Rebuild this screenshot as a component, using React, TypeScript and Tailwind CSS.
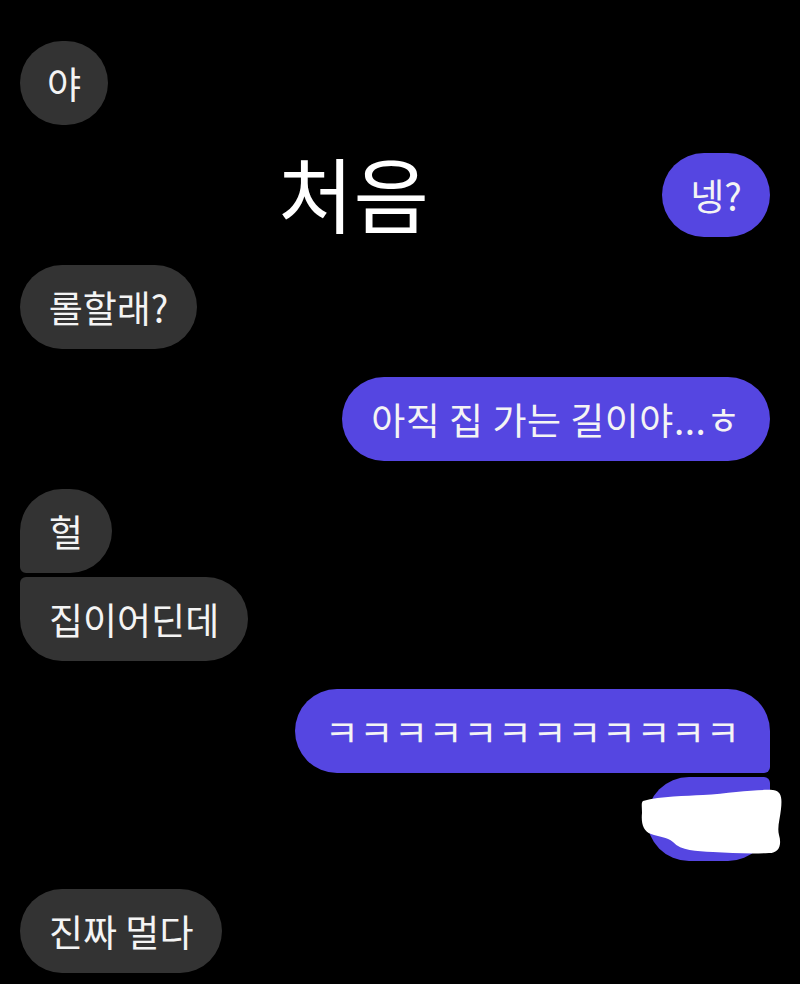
const font = { fontFamily: '"Noto Sans CJK KR", "Noto Sans", sans-serif' };

type Side = 'in' | 'out';

function Bubble({ side, text, corner = '' }: { side: Side; text?: string; corner?: string }) {
  const color = side === 'in' ? 'bg-[#333333]' : 'bg-[#5546e1]';
  return (
    <div
      className={`h-[84px] min-w-[88px] px-[29px] rounded-[42px] flex items-center justify-center ${color} ${corner}`}
    >
      <span className="text-[37px] leading-none text-[#f4f4f4] whitespace-pre">{text}</span>
    </div>
  );
}

function Row({ side, children }: { side: Side; children: React.ReactNode }) {
  return <div className={`flex ${side === 'in' ? 'justify-start' : 'justify-end'}`}>{children}</div>;
}

function Scribble() {
  return (
    <svg
      className="absolute left-[-6px] top-[10px]"
      width="142"
      height="70"
      viewBox="0 0 142 70"
    >
      <path
        d="M2 14 C 20 9, 45 9, 62 8 C 90 6, 115 2, 132 3 C 141 4, 141 12, 140 22 C 139 32, 136 40, 138 48 C 141 58, 138 66, 128 66 C 110 67, 90 66, 72 65 C 55 64, 40 64, 32 55 C 26 50, 18 50, 10 47 C 2 44, 0 36, 1 26 C 1 19, 0 16, 2 14 Z"
        fill="#ffffff"
      />
    </svg>
  );
}

export default function App() {
  return (
    <div className="w-[800px] h-[984px] bg-black overflow-hidden" style={font}>
      <div className="flex flex-col pt-[41px] pl-[20px] pr-[30px]">
        <Row side="in">
          <div className="h-[84px] w-[88px] rounded-[42px] bg-[#333333] flex items-center justify-center">
            <span className="text-[37px] leading-none text-[#f4f4f4]">야</span>
          </div>
        </Row>

        <div className="mt-[28px] flex items-center justify-between">
          <span className="ml-[258px] text-[82px] leading-none text-white mt-[-6px]">처음</span>
          <div className="h-[84px] w-[108px] rounded-[42px] bg-[#5546e1] flex items-center justify-center">
            <span className="text-[37px] leading-none text-[#f4f4f4]">넹?</span>
          </div>
        </div>

        <div className="mt-[28px]">
          <Row side="in">
            <div className="h-[84px] w-[177px] rounded-[42px] bg-[#333333] flex items-center justify-center">
              <span className="text-[37px] leading-none text-[#f4f4f4]">롤할래?</span>
            </div>
          </Row>
        </div>

        <div className="mt-[28px]">
          <Row side="out">
            <div className="h-[84px] w-[428px] rounded-[42px] bg-[#5546e1] flex items-center justify-center">
              <span className="text-[37px] leading-none text-[#f4f4f4] tracking-[0.5px]">아직 집 가는 길이야...ㅎ</span>
            </div>
          </Row>
        </div>

        <div className="mt-[28px] flex flex-col gap-[4px]">
          <Row side="in">
            <Bubble side="in" text="헐" corner="rounded-bl-[6px]" />
          </Row>
          <Row side="in">
            <Bubble side="in" text="집이어딘데" corner="rounded-tl-[6px]" />
          </Row>
        </div>

        <div className="mt-[28px] flex flex-col gap-[4px]">
          <Row side="out">
            <div className="h-[84px] w-[475px] rounded-[42px] rounded-br-[6px] bg-[#5546e1] flex items-center justify-center">
              <span className="text-[37px] leading-none text-[#f4f4f4] tracking-[0.6px]">ㅋㅋㅋㅋㅋㅋㅋㅋㅋㅋㅋㅋ</span>
            </div>
          </Row>
          <Row side="out">
            <div className="relative">
              <div className="h-[84px] w-[123px] rounded-[42px] rounded-tr-[6px] bg-[#5546e1]" />
              <Scribble />
            </div>
          </Row>
        </div>

        <div className="mt-[28px]">
          <Row side="in">
            <Bubble side="in" text="진짜 멀다" />
          </Row>
        </div>
      </div>
    </div>
  );
}
